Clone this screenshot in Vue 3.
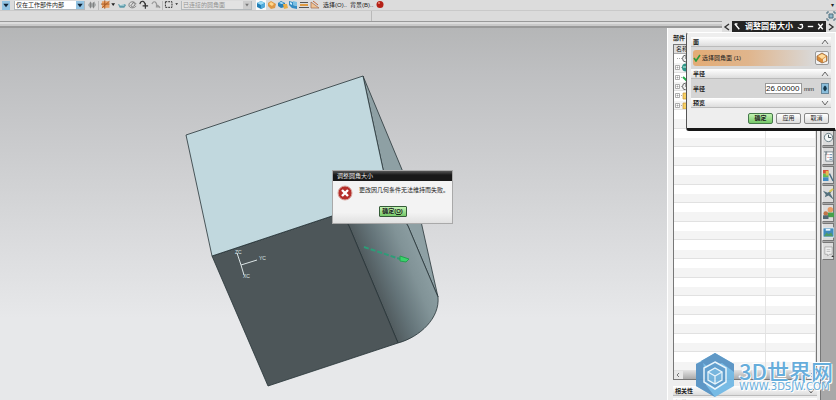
<script setup>
import { ref } from 'vue'

const scope = ref('仅在工作部件内部')
const rule = ref('已连接的圆角面')
const radius = ref('26.00000')

const treeRows = Array.from({ length: 34 }, (_, i) => ({
  id: i,
  icon: ['clock', 'globe', 'check', 'clock', 'folder', 'folder'][i] || '',
  expandable: i > 0 && i < 6
}))
const resources = ['clock', 'list', 'palette', 'tool', 'people', 'picture', 'note']
</script>

<template>
  <div class="app">
    <header class="toolbar">
      <button class="drop" aria-label="过滤器"><svg viewBox="0 0 8 10"><path d="M1 3h6L4 7z" /></svg></button>
      <div class="combo">
        <select v-model="scope" aria-label="选择范围"><option>仅在工作部件内部</option></select>
        <span class="drop"><svg viewBox="0 0 8 10"><path d="M1 3h6L4 7z" /></svg></span>
      </div>
      <div class="tools">
        <button aria-label="同步"><svg viewBox="0 0 11 10"><path d="M1 5l3-4 1 2h2l1-2 2 4-3 4-1-2H5L4 9z" fill="#a4a8a9" /><path d="M4 2v6M7 2v6" stroke="#777" /></svg></button>
        <i class="sep"></i>
        <button class="wide" aria-label="捕捉点"><svg viewBox="0 0 16 10"><path d="M1 1h8v7H1z" fill="#e9a064" /><path d="M4 0v9M0 4h9M1 8l8-7" stroke="#a75b25" /><path d="M11 3h4l-2 3z" fill="#222" /></svg></button>
        <button aria-label="移动"><svg viewBox="0 0 11 10"><path d="M1 4l3 1 4-1 2 1-2 3H3z" fill="#5c9baa" /><path d="M3 5h5" stroke="#e4f5f7" /></svg></button>
        <button aria-label="旋转"><svg viewBox="0 0 11 10"><path d="M9 4C7 0 1 1 1 5s6 4 8 1M3 6l3-4 2 3-3 2z" fill="#ddd" stroke="#666" stroke-width=".8" /></svg></button>
        <button aria-label="添加曲线"><svg viewBox="0 0 11 10"><path d="M1 4c1-5 6-4 6 3M4 6h6M7 3v6" fill="none" stroke="#333" stroke-width="1.300" /></svg></button>
        <button aria-label="曲线"><svg viewBox="0 0 11 10"><path d="M1 4c2-5 6-2 5 3h4M7 5l3 3" fill="none" stroke="#999" stroke-width="1.300" /></svg></button>
        <i class="sep"></i>
        <button class="wide" aria-label="矩形选择"><svg viewBox="0 0 16 10"><path d="M1.500 1.500h7v6h-7z" fill="none" stroke="#222" stroke-dasharray="2 1" /><path d="M12 3h3l-1.500 2z" fill="#222" /></svg></button>
      </div>
      <div class="combo off">
        <select v-model="rule" disabled aria-label="面规则"><option>已连接的圆角面</option></select>
        <span class="drop"><svg viewBox="0 0 8 10"><path d="M2 3h4L4 6z" /></svg></span>
      </div>
      <div class="tools view">
        <button class="picked" aria-label="着色"><svg viewBox="0 0 10 10"><path d="M1 3l4-2 4 2v4L5 9 1 7z" fill="#237fb6" /><path d="M1 3l4-2 4 2-4 2z" fill="#9bdbf6" /><path d="M5 5l4-2v4L5 9z" fill="#51aadb" /></svg></button>
        <button aria-label="实体"><svg viewBox="0 0 10 10"><path d="M1 3l3-2 5 3-1 4-4 1-3-3z" fill="#df9845" /><path d="M2 4l2-2 3 2-2 2z" fill="#ffd68c" /></svg></button>
        <button aria-label="带边着色"><svg viewBox="0 0 10 10"><path d="M0 3l3-2 4 2v4L3 8 0 6z" fill="#2781b9" /><path d="M5 4h4l1 4-4 1z" fill="#eaae48" /><path d="M1 3l2-1 3 1-2 1z" fill="#bdeaff" /></svg></button>
        <button aria-label="局部着色"><svg viewBox="0 0 10 10"><path d="M1 1l4 1v3l4 1v3l-5-1-3-3z" fill="#328ac3" /><path d="M5 1l4 1v4L5 5z" fill="#79bfe4" /><path d="M2 2l2 1v2L2 4z" fill="#cceeff" /></svg></button>
        <button aria-label="剖切"><svg viewBox="0 0 10 10"><path d="M1 2.500h8M0 7.500h10" stroke="#555" /><path d="M1 5h8" stroke="#df9a41" stroke-width="2" /></svg></button>
        <button aria-label="编辑截面"><svg viewBox="0 0 10 10"><path d="M1 8V2l8 6z" fill="#f1c393" stroke="#9b6850" stroke-width=".7" /><path d="M3 1l5 4" stroke="#c0653c" /></svg></button>
      </div>
      <button class="word">选择(O)..</button>
      <button class="word">背景(B)..</button>
      <button class="ball" aria-label="停止"><svg viewBox="0 0 8 10"><circle cx="4" cy="4.500" r="3.500" fill="#b52016" /><circle cx="3" cy="3" r="1" fill="#ee8c78" /></svg></button>
      <span class="more">▾</span>
    </header>
    <div class="promptbar">
      <span class="prompt"></span><span class="status"></span>
      <button class="full" aria-label="全屏"><svg viewBox="0 0 10 10"><path d="M3 3h4v4H3z" fill="#8fb6c8" stroke="#4e7180" /><path d="M1 3V1h2M7 1h2v2M9 7v2H7M3 9H1V7" fill="none" stroke="#4e7180" /></svg></button>
    </div>
    <div class="strip"></div>

    <main class="workspace">
      <section class="viewport">
        <svg class="model" viewBox="0 28 667 372" preserveAspectRatio="xMinYMin meet" role="img" aria-label="模型">
          <defs>
            <linearGradient id="fillet" gradientUnits="userSpaceOnUse" x1="371" y1="287" x2="429" y2="263">
              <stop offset="0" stop-color="#4d5659" /><stop offset=".35" stop-color="#65757a" />
              <stop offset=".7" stop-color="#819397" /><stop offset="1" stop-color="#8ea0a4" />
            </linearGradient>
          </defs>
          <g stroke="#273437" stroke-width=".8" stroke-linejoin="round">
            <path d="M363 76L418 208 438 297 408 226 389 197z" fill="#8ea0a4" />
            <path d="M349 226l-8-12 48-17 19 29 30 71C440 318 420 337 398 343z" fill="url(#fillet)" />
            <path d="M212 256l129-43 8 13 49 117-130 43z" fill="#4d5659" />
            <path d="M186 135l177-59 26 121-177 59z" fill="#c1d8de" />
          </g>
          <path d="M364 247l36 12" stroke="#2e9c78" stroke-width="2" stroke-dasharray="5 2" />
          <path d="M400 256l9 3-3 3-6-1z" fill="#3bd36b" stroke="#24a050" />
          <path d="M237 253l4 12 3 10M241 265l16-5" fill="none" stroke="#dce5e6" stroke-width="1" />
          <g class="axis"><text x="235" y="254">ZC</text><text x="259" y="260">YC</text><text x="243" y="278">XC</text></g>
        </svg>
      </section>

      <aside class="navigator">
        <h2>部件</h2>
        <div class="tree">
          <table>
            <thead><tr><th>名称</th><th></th></tr></thead>
            <tbody>
              <tr v-for="row in treeRows" :key="row.id">
                <td>
                  <svg v-if="row.icon" viewBox="0 0 16 9">
                    <path d="M3 4.500h6" stroke="#aaa" stroke-dasharray="1 1" />
                    <path v-if="row.expandable" d="M1.500 2.500h4v4h-4zM2.500 4.500h2M3.500 3.500v2" fill="#fff" stroke="#999" stroke-width=".8" />
                    <g v-if="row.icon === 'clock'"><circle cx="12" cy="4.500" r="3.500" fill="#eee" stroke="#666" /><path d="M12 2v3h2" fill="none" stroke="#555" /></g>
                    <g v-else-if="row.icon === 'globe'"><circle cx="12" cy="4.500" r="4" fill="#2c9384" /><path d="M9 4h5" stroke="#c9f3e6" /></g>
                    <path v-else-if="row.icon === 'check'" d="M9 4l3 3 4-6" fill="none" stroke="#20ac48" stroke-width="2" />
                    <path v-else d="M9 2h3l1 1h3v5H9z" fill="#f8d165" stroke="#c69637" stroke-width=".7" />
                  </svg>
                </td><td></td>
              </tr>
            </tbody>
          </table>
          <div class="scroll">
            <svg viewBox="0 0 4 8"><path d="M3 2L1 4l2 2" /></svg><i></i><svg viewBox="0 0 4 8"><path d="M1 2l2 2-2 2" /></svg>
          </div>
        </div>
        <button class="fold">相关性<svg viewBox="0 0 8 8"><path d="M1 2l3 4 3-4" /></svg></button>
        <button class="fold last">细节<svg viewBox="0 0 8 8"><path d="M1 2l3 4 3-4" /></svg></button>
      </aside>

      <nav class="resources">
        <button v-for="name in resources" :key="name" :aria-label="name">
          <svg viewBox="0 0 12 16">
            <g v-if="name === 'clock'"><circle cx="6" cy="8" r="4.500" fill="#f2f6f6" stroke="#617780" /><path d="M6 5v3h3" fill="none" stroke="#33464d" /></g>
            <g v-else-if="name === 'list'"><path d="M3 3h8v10H3zM1 3h3v3H2" fill="#fff" stroke="#75828a" /><path d="M5 6h1M5 9h1" stroke="#cf4030" /><path d="M7 6h3M7 9h3M7 11h3" stroke="#557ca2" /></g>
            <g v-else-if="name === 'palette'"><path d="M0 2h6v4H0z" fill="#d8503c" /><path d="M0 6h6v4H0z" fill="#67b955" /><path d="M0 10h6v4H0z" fill="#428bc3" /><path d="M3 3h3v5H3z" fill="#e5bd4b" /><path d="M7 6l4 8" stroke="#456b80" stroke-width="1.500" /></g>
            <g v-else-if="name === 'tool'"><path d="M0 4l5 2 5-3-2 4 4 7-6-5-4 2 1-3z" fill="#54707c" /><path d="M7 5l4-3" stroke="#dac857" stroke-width="2" /></g>
            <g v-else-if="name === 'people'"><circle cx="8" cy="4" r="3" fill="#e79a65" /><path d="M5 7h7v5H5z" fill="#46a04a" /><circle cx="3" cy="8" r="2.500" fill="#c27648" /><path d="M0 10h6v4H0z" fill="#526773" /></g>
            <g v-else-if="name === 'picture'"><path d="M0 3h12v10H0z" fill="#418bbd" stroke="#eaf0f2" /><path d="M1 12l3-4 2 2 3-2 2 4z" fill="#4f9b66" /><path d="M3 5h5" stroke="#e9f6ff" stroke-width="2" /></g>
            <g v-else><path d="M2 3h8v8H7l-2 2v-2H2z" fill="#eee" stroke="#aaa" /><path d="M4 6h4M4 8h4" stroke="#bbb" /><path d="M9 14h3l-1.500-2z" fill="#333" /></g>
          </svg>
        </button>
      </nav>
    </main>

    <section class="panel" aria-label="调整圆角大小">
      <div class="panel-title">
        <button class="side" aria-label="左移"><svg viewBox="0 0 10 10"><path d="M7 2L3 5l4 3" /></svg></button>
        <div class="caption">
          <svg viewBox="0 0 10 10"><path d="M2 2l5 6M2 2h3" stroke="#fff" stroke-width="1.500" /></svg>
          <h1>调整圆角大小</h1>
          <button aria-label="重置"><svg viewBox="0 0 10 10"><path d="M6 2c4 4-1 7-4 4M4 3h3v3" fill="none" stroke="#fff" stroke-width="1.300" /></svg></button>
          <button aria-label="最小化"><svg viewBox="0 0 10 10"><path d="M2 5h6" stroke="#fff" stroke-width="1.500" /></svg></button>
          <button aria-label="关闭"><svg viewBox="0 0 10 10"><path d="M2.500 2l5 6M7.500 2l-5 6" stroke="#fff" stroke-width="1.500" /></svg></button>
        </div>
        <button class="side" aria-label="右移"><svg viewBox="0 0 10 10"><path d="M3 2l4 3-4 3" /></svg></button>
      </div>
      <div class="panel-body">
        <button class="group">面<svg viewBox="0 0 8 8"><path d="M1 6l3-4 3 4" /></svg></button>
        <div class="pick">
          <div class="pick-label"><svg viewBox="0 0 8 8"><path d="M1 4l2 3 4-6" fill="none" stroke="#299b3e" stroke-width="1.600" /></svg>选择圆角面 (1)</div>
          <button class="face" aria-label="选择面"><svg viewBox="0 0 12 12"><path d="M1 4l5-3 5 3v5l-5 2-5-3z" fill="#d88b39" stroke="#8f633b" stroke-width=".7" /><path d="M2 4l4-2 4 2-4 3z" fill="#ffdc9d" /><path d="M7 7l3-2v4l-3 1z" fill="#f4e6cc" /></svg></button>
        </div>
        <button class="group">半径<svg viewBox="0 0 8 8"><path d="M1 6l3-4 3 4" /></svg></button>
        <div class="field">
          <label for="radius">半径</label>
          <span class="value"><input id="radius" v-model="radius" /><span>mm</span></span>
          <button class="step" aria-label="参数选项"><svg viewBox="0 0 8 10"><path d="M4 1L2 3v2H1l3 4 3-4H6V3z" fill="#123448" /></svg></button>
        </div>
        <button class="group">预览<svg viewBox="0 0 8 8"><path d="M1 2l3 4 3-4" /></svg></button>
        <div class="actions"><button class="ok">确定</button><button>应用</button><button>取消</button></div>
      </div>
    </section>

    <section class="alert" role="alertdialog" aria-labelledby="alert-title">
      <h1 id="alert-title">调整圆角大小</h1>
      <div class="alert-body">
        <div class="message">
          <svg viewBox="0 0 16 16"><circle cx="8" cy="8" r="7" fill="#b52e2a" stroke="#d9aaa2" /><path d="M5 5l6 6M11 5l-6 6" stroke="#fff" stroke-width="2.400" /></svg>
          <p>更改因几何条件无法维持而失败。</p>
        </div>
        <button class="ok">确定(<u>O</u>)</button>
      </div>
    </section>

    <div class="brand">
      <svg viewBox="0 0 38 44">
        <path d="M19 0l19 11v22L19 44 0 33V11z" fill="#72b9e5" />
        <path d="M19 0l19 11v8L26 10 12 14 5 8zM0 11l7-3 3 24 9 12L0 33z" fill="#5793c4" />
        <path d="M19 9l11 6v14l-11 7-11-7V15z" fill="#5b9bcc" stroke="#e9f6fd" stroke-width="1.500" />
        <path d="M19 15l7 4v8l-7 4-7-4v-8z" fill="#73b5df" stroke="#e9f6fd" stroke-width="1.300" />
        <path d="M12 19l7 4 7-4M19 23v8" fill="none" stroke="#e9f6fd" stroke-width="1.300" />
      </svg>
      <div><strong>3D世界网</strong><small>WWW.3DSJW.COM</small></div>
    </div>
  </div>
</template>

<style>
body { margin: 0; }
</style>

<style scoped>
* { box-sizing: border-box; }
.app { position: relative; display: flex; flex-direction: column; height: 100vh; overflow: hidden; background: #dadada; color: #222; font: 6px/8px "Liberation Sans", "Noto Sans CJK SC", sans-serif; }
button, input, select { margin: 0; padding: 0; border: 0; background: none; color: inherit; font: inherit; }
h1, h2, p { margin: 0; font-size: inherit; }
svg { display: block; flex: none; }

.toolbar { display: flex; align-items: center; height: 10px; padding-left: 2px; background: #dcdcdc; }
.drop { display: flex; width: 8px; height: 9px; background: #93c4e3; }
.drop svg { width: 8px; height: 9px; fill: #123; }
.combo { display: flex; align-items: center; width: 71px; height: 9px; margin-left: 4px; border: 1px solid #b3b8bb; border-top: 0; background: #fff; }
.combo select { flex: 1; min-width: 0; height: 8px; padding-left: 1px; appearance: none; line-height: 8px; opacity: 1; }
.combo .drop { height: 8px; }
.off { margin-left: 2px; background: #e2e2e2; color: #929292; }
.off .drop { background: #ccc; }
.off .drop svg { fill: #777; }
.tools { display: flex; align-items: center; width: 94px; justify-content: space-between; padding-left: 2px; }
.tools button, .tools svg { width: 10px; height: 10px; }
.tools .wide, .tools .wide svg { width: 15px; }
.sep { width: 1px; height: 9px; background: #bbb; }
.view { width: 64px; margin-left: 4px; padding: 0; }
.picked { background: #fafafa; }
.word { margin-left: 3px; white-space: nowrap; line-height: 9px; }
.ball { margin-left: 3px; }
.ball svg { width: 8px; height: 10px; }
.more { margin-left: auto; padding-right: 2px; }
.promptbar { display: flex; height: 12px; border-top: 1px solid #c9c9c9; border-bottom: 1px solid #999; background: #dbdbdb; }
.prompt { flex: 371; border-right: 1px solid #b9b9b9; }
.status { flex: 453; }
.full, .full svg { width: 10px; height: 10px; }
.strip { height: 6px; border-top: 2px solid #ddd; border-bottom: 2px solid #999; background: #c9c9c9; }

.workspace { display: flex; flex: 1; min-height: 0; }
.viewport { flex: 1; min-width: 0; background: linear-gradient(#b5b6b7, #bebfc1 12%, #dcdddf 60%, #e7e8ea 78%, #e7e8ea); }
.model { width: 100%; height: 100%; }
.axis { fill: #dce5e6; font-size: 5px; }

.navigator { display: flex; flex-direction: column; width: 153px; padding: 5px 3px 0 5px; border-left: 1px solid #fff; background: #eee; }
.navigator h2 { height: 11px; line-height: 10px; }
.tree { display: flex; flex: 1; flex-direction: column; min-height: 0; margin-bottom: 6px; border: 1px solid #777; background: #fff; }
table { display: grid; flex: 1; grid-template-rows: 9px repeat(34, minmax(0, 1fr)); min-height: 0; }
thead, tbody { display: contents; }
tr { display: grid; grid-template-columns: 93fr 50fr; min-height: 0; overflow: hidden; }
th { padding: 0 2px; border-bottom: 1px solid #aaa; background: #ddd; text-align: left; font-weight: 400; }
td { padding: 0; overflow: hidden; border-right: 1px solid #e4e4e4; }
tbody tr:nth-child(even) { border-bottom: 1px solid #e1e1e1; background: #f4f4f4; }
td svg { width: 16px; height: 9px; }
.scroll { display: flex; height: 8px; padding: 0 2px; gap: 3px; background: #e8e8e8; }
.scroll svg { width: 4px; height: 8px; fill: none; stroke: #777; }
.scroll i { flex: 1; background: linear-gradient(#ddd, #aaa); }
.fold, .group { display: flex; flex: none; align-items: center; justify-content: space-between; width: 100%; height: 10px; padding: 0 2px; border-bottom: 1px solid #bbb; background: linear-gradient(#fff, #ddd); font-weight: 700; }
.fold svg, .group svg { width: 8px; height: 8px; fill: none; stroke: #666; stroke-width: 1; }
.last { margin-top: 2px; margin-bottom: -8px; }

.resources { display: flex; flex-direction: column; gap: 1px; width: 16px; padding: 100px 2px 0 1px; border-left: 1px solid #777; background: #a8a8a8; }
.resources button { height: 18px; border: 1px solid #777; border-left-color: #eee; background: #dcdcdc; }
.resources svg { width: 11px; height: 15px; }

.panel { position: absolute; top: 21px; right: 0; width: 150px; }
.panel-title { display: flex; width: 114px; height: 11px; margin-left: auto; }
.side { width: 10px; background: #ddd; }
.side svg { width: 10px; height: 10px; fill: none; stroke: #333; stroke-width: 1.4; }
.caption { display: flex; flex: 1; align-items: center; gap: 1px; padding: 0 1px; background: #242424; color: #fff; }
.caption h1 { flex: 1; text-align: center; font-size: 8px; line-height: 10px; white-space: nowrap; }
.caption svg { width: 9px; height: 9px; }
.panel-body { padding: 4px 4px 0; border: 1px solid #fff; border-left-color: #555; border-bottom: 3px solid #171717; border-radius: 3px 0 0 3px; background: #eee; }
.pick { display: flex; align-items: center; height: 22px; padding: 0 2px; background: #d9d9d9; }
.pick-label { display: flex; flex: 1; align-items: center; gap: 1px; height: 16px; border-radius: 3px; background: linear-gradient(90deg, #e3ac75, #e0b58c 45%, #d9d9d9); }
.pick-label svg { width: 8px; height: 8px; }
.face { display: grid; width: 14px; height: 14px; place-items: center; border: 1px solid #999; border-radius: 2px; background: #f2f2f2; }
.face svg { width: 12px; height: 12px; }
.field { display: flex; align-items: center; height: 19px; padding: 0 2px; background: #d5d5d5; }
.field label { flex: 1; font-weight: 700; }
.value { display: flex; align-items: center; gap: 2px; width: 56px; }
.value input { width: 37px; height: 11px; border: 1px solid #999; background: #fff; font-size: 8px; }
.step { display: grid; place-items: center; width: 8px; height: 11px; border: 1px solid #68879a; background: #8abedc; }
.step svg { width: 6px; height: 9px; }
.actions { display: flex; align-items: center; justify-content: flex-end; gap: 3px; height: 20px; padding-right: 2px; }
.actions button { width: 25px; height: 11px; border: 1px solid #888; border-radius: 2px; background: linear-gradient(#fff, #ddd); line-height: 9px; }
.actions .ok, .alert .ok { border-color: #46784b; background: linear-gradient(#c2f3b2, #75c768); font-weight: 700; }

.alert { position: absolute; top: 170px; left: 332px; width: 121px; border: 1px solid #a9a9a9; background: #eee; }
.alert h1 { height: 10px; padding-left: 4px; background: linear-gradient(#555, #181818 40%); color: #eee; font-weight: 400; line-height: 10px; }
.alert-body { display: flex; flex-direction: column; align-items: center; height: 42px; padding: 4px 4px 6px; background: linear-gradient(#f3f3f3 75%, #e1e1e1); }
.message { display: flex; gap: 6px; width: 100%; height: 21px; }
.message svg { width: 16px; height: 16px; }
.message p { padding-top: 1px; white-space: nowrap; }
.alert .ok { width: 28px; height: 11px; border: 1px solid #355c38; border-radius: 1px; line-height: 9px; }

.brand { position: absolute; right: 3px; bottom: 3px; display: flex; align-items: center; gap: 5px; color: #66addb; text-shadow: 0 0 1px #fff, 1px 1px #fff, -1px -1px #fff; white-space: nowrap; }
.brand > svg { width: 38px; height: 44px; opacity: .95; }
.brand strong, .brand small { display: block; }
.brand strong { font: 500 22px/24px "Noto Sans CJK SC", sans-serif; }
.brand small { font: 10px/10px "DejaVu Sans", sans-serif; }
</style>
